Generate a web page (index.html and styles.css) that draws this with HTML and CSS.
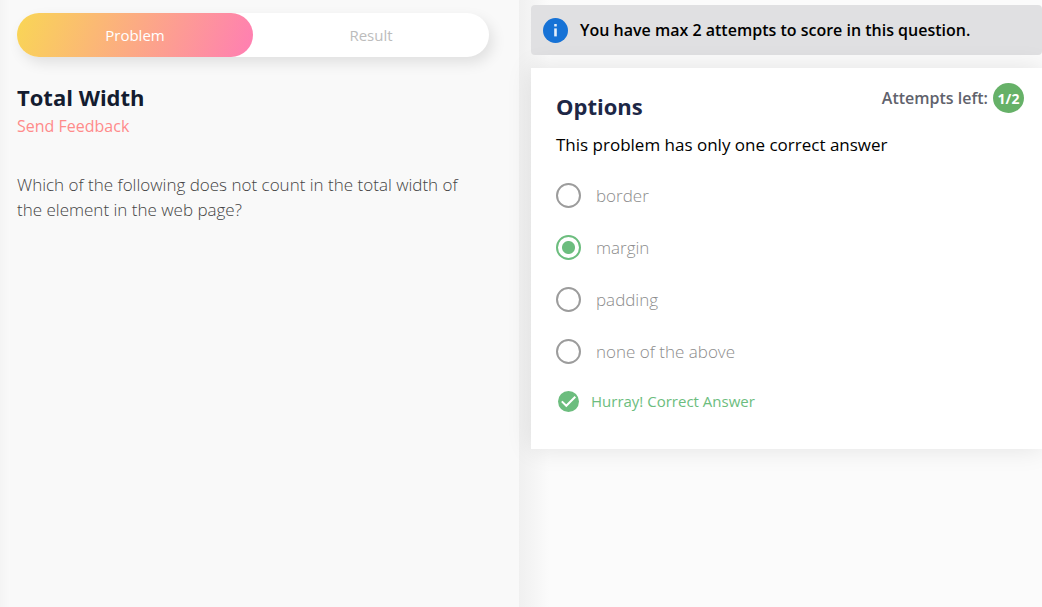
FILE: index.html
```html
<!DOCTYPE html>
<html lang="en">
<head>
<meta charset="utf-8">
<meta name="viewport" content="width=device-width, initial-scale=1">
<title>Total Width</title>
<link rel="stylesheet" href="styles.css">
</head>
<body>
<div class="layout">
  <main class="problem">
    <div class="tabs" role="tablist">
      <button class="tab tab-active" type="button" role="tab" aria-selected="true">Problem</button>
      <button class="tab" type="button" role="tab" aria-selected="false">Result</button>
    </div>
    <h1 class="title">Total Width</h1>
    <a class="feedback" href="#feedback">Send Feedback</a>
    <p class="question">Which of the following does not count in the total width of the element in the web page?</p>
  </main>
  <section class="answer">
    <div class="notice">
      <svg class="notice-icon" viewBox="0 0 25 25" aria-hidden="true">
        <circle cx="12.5" cy="12.5" r="12.5" fill="#1672d6"/>
        <rect x="11.2" y="6" width="2.6" height="2.6" rx=".5" fill="#e4eefa"/>
        <rect x="11.2" y="10.4" width="2.6" height="8" fill="#e4eefa"/>
      </svg>
      <span>You have max 2 attempts to score in this question.</span>
    </div>
    <form class="card">
      <div class="card-head">
        <h2 class="card-title">Options</h2>
        <div class="attempts"><span>Attempts left:</span><span class="count">1/2</span></div>
      </div>
      <fieldset class="options">
        <legend class="hint">This problem has only one correct answer</legend>
        <label class="option"><input class="radio" type="radio" name="answer"><span>border</span></label>
        <label class="option"><input class="radio" type="radio" name="answer" checked><span>margin</span></label>
        <label class="option"><input class="radio" type="radio" name="answer"><span>padding</span></label>
        <label class="option"><input class="radio" type="radio" name="answer"><span>none of the above</span></label>
      </fieldset>
      <div class="verdict">
        <svg class="verdict-icon" viewBox="0 0 21 21" aria-hidden="true">
          <circle cx="10.5" cy="10.5" r="10.5" fill="#6cbd7e"/>
          <path d="M3.8 10.4l4.5 4.4 9-9" fill="none" stroke="#fff" stroke-width="2"/>
        </svg>
        <span>Hurray! Correct Answer</span>
      </div>
    </form>
  </section>
</div>
</body>
</html>
```
FILE: styles.css
```css
* { box-sizing: border-box; }
body {
  margin: 0;
  background: #fbfbfb;
  font-family: "Open Sans", "Noto Sans", sans-serif;
  color: #000;
}
.layout {
  display: grid;
  grid-template-columns: 519fr 523fr;
  min-height: 100vh;
}
.problem {
  padding: 13px 30px 24px 17px;
  background: linear-gradient(90deg, #f4f4f4, #f9f9f9 10px);
}
.tabs {
  display: flex;
  height: 44px;
  border-radius: 22px;
  background: #fff;
  box-shadow: 4px 6px 14px rgba(0, 0, 0, .1);
}
.tab {
  flex: 1;
  border: 0;
  border-radius: 22px;
  background: none;
  color: #bcbcbc;
  font: 400 15px/20px "Open Sans", sans-serif;
}
.tab-active {
  background: linear-gradient(110deg, #f9d655, #ff7eb3);
  color: #fff;
}
.title {
  margin: 24px 0 0;
  color: #141c30;
  font-size: 22px;
  font-weight: 700;
  line-height: 32px;
}
.feedback {
  display: block;
  margin-top: 2px;
  color: #ff8b8b;
  font-size: 16px;
  line-height: 22px;
  text-decoration: none;
}
.question {
  margin: 35px 0 0;
  padding-right: 12px;
  color: #444;
  font-size: 17px;
  font-weight: 300;
  line-height: 25px;
}
.answer {
  padding: 5px 0 24px 12px;
  background: linear-gradient(90deg, #f0f0f0, #f4f4f4 12px, #fbfbfb 30px);
}
.notice {
  display: flex;
  align-items: center;
  gap: 12px;
  min-height: 50px;
  padding: 0 12px;
  border-radius: 4px;
  background: #e0e0e2;
  font-size: 16px;
  font-weight: 600;
  line-height: 24px;
}
.notice-icon { flex: none; width: 25px; height: 25px; }
.card {
  margin-top: 13px;
  padding: 15px 18px 36px 25px;
  background: #fff;
  box-shadow: 0 0 24px rgba(0, 0, 0, .1);
}
.card-head {
  display: flex;
  align-items: flex-start;
  justify-content: space-between;
  height: 49px;
}
.card-title {
  margin: 7px 0 0;
  color: #1d2746;
  font-size: 22px;
  font-weight: 700;
  line-height: 32px;
}
.attempts {
  display: flex;
  align-items: center;
  gap: 5px;
  color: #5f626c;
  font-size: 16px;
  font-weight: 600;
}
.count {
  display: grid;
  place-items: center;
  width: 31px;
  height: 30px;
  border-radius: 50%;
  background: #66b168;
  color: #fff;
  font-size: 14px;
  font-weight: 700;
}
.options {
  display: grid;
  gap: 27px;
  margin: 0;
  padding: 0;
  border: 0;
}
.hint {
  margin-bottom: 25px;
  padding: 0;
  font-size: 17px;
  line-height: 26px;
}
.option {
  display: flex;
  align-items: center;
  gap: 15px;
  color: #8c8c8c;
  font-size: 17px;
  font-weight: 300;
  line-height: 24px;
}
.radio {
  appearance: none;
  width: 25px;
  height: 25px;
  margin: 0;
  border: 2px solid #9c9c9c;
  border-radius: 50%;
}
.radio:checked {
  border-color: #6cbd7e;
  background: radial-gradient(circle, #6cbd7e 6px, transparent 7px);
}
.verdict {
  display: flex;
  align-items: center;
  gap: 12px;
  margin-top: 25px;
  padding-left: 2px;
  color: #6cbd7e;
  font-size: 15px;
  line-height: 24px;
}
.verdict-icon { flex: none; width: 21px; height: 21px; }
```
